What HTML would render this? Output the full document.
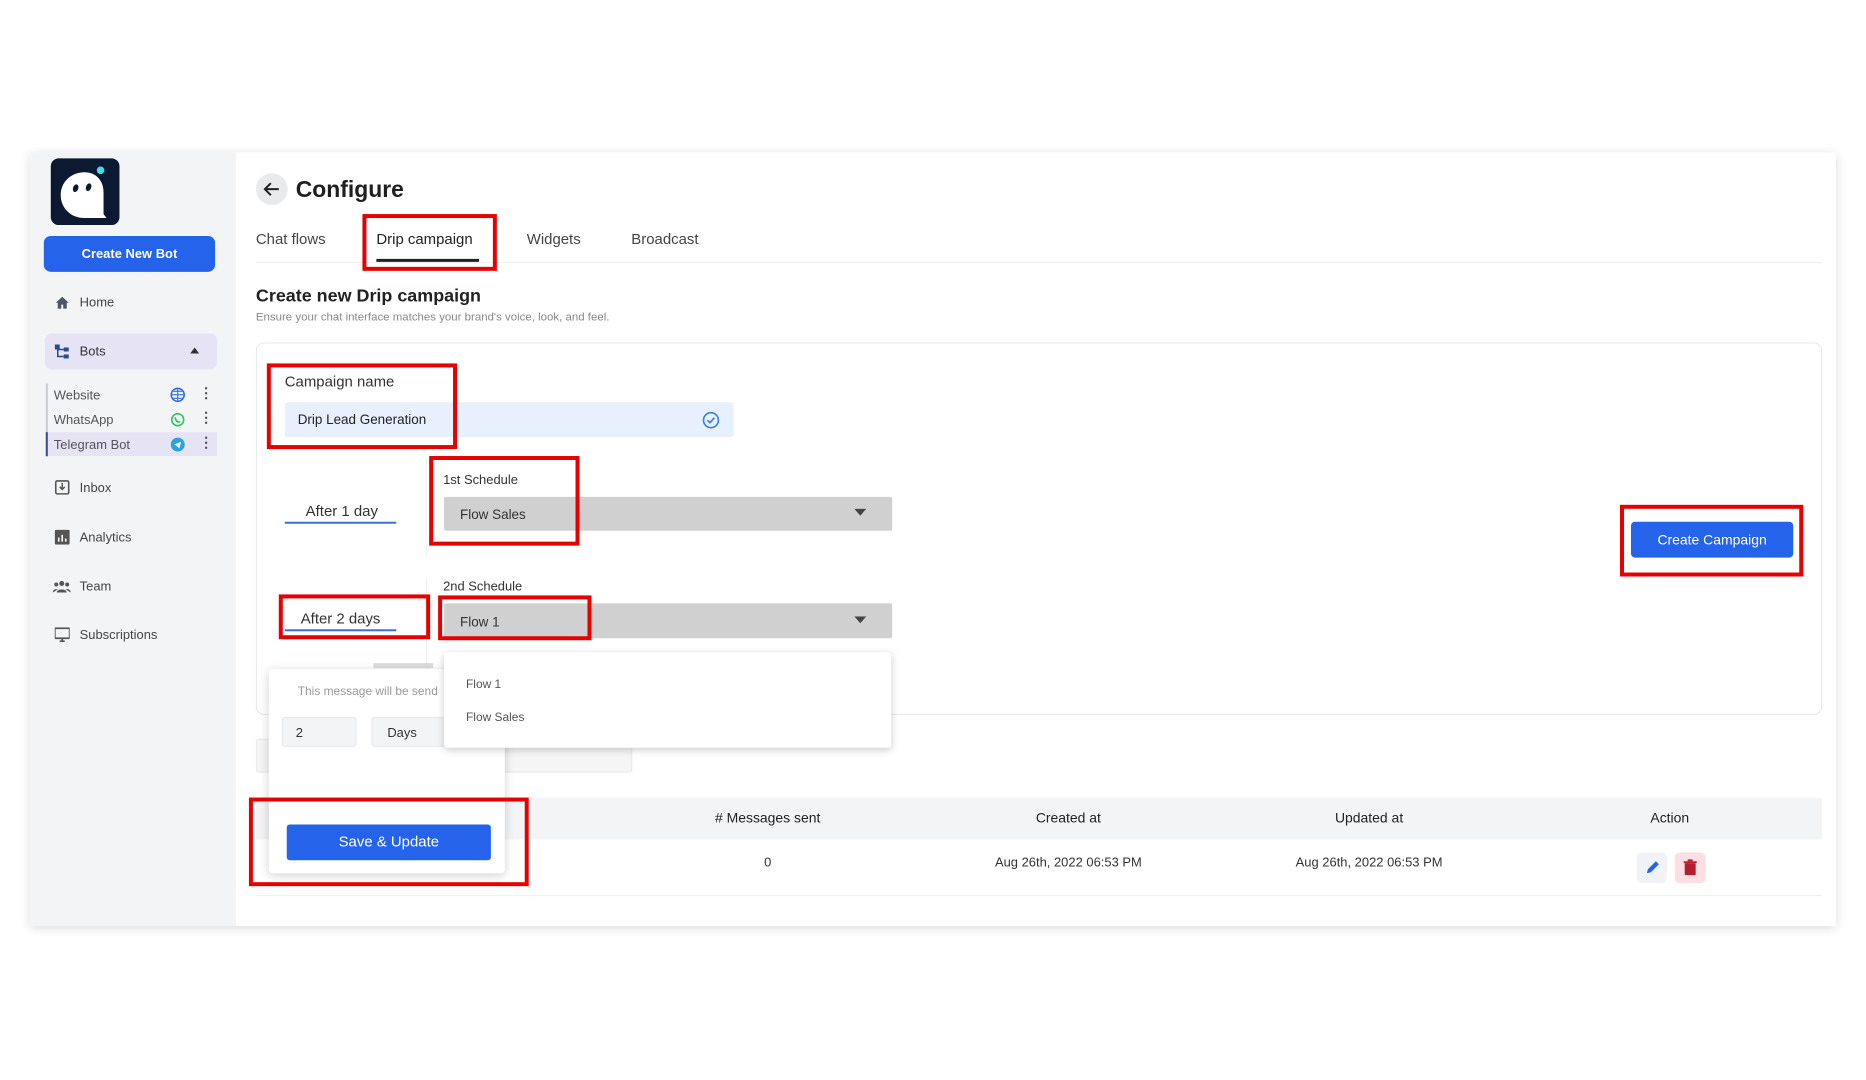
<!DOCTYPE html>
<html><head><meta charset="utf-8"><style>
*{box-sizing:border-box;margin:0;padding:0}
body{width:1866px;height:1080px;background:#fff;font-family:"Liberation Sans",sans-serif;position:relative;overflow:hidden;color:#222}
#w{position:absolute;left:0;top:0;width:1866px;height:1080px;transform:scale(0.9957);transform-origin:0 0}
.a{position:absolute}
.red{position:absolute;border:4px solid #e60000}
.t{position:absolute;white-space:nowrap}
</style></head><body><div id="w">
<div class="a" style="left:30px;top:153px;width:1814px;height:777px;background:#fff;box-shadow:0 2px 10px rgba(0,0,0,.15)"></div>
<div class="a" style="left:30px;top:153px;width:207px;height:777px;background:#f3f4f6"></div>
<!-- logo -->
<div class="a" style="left:51px;top:159px;width:69px;height:67px;background:#0b1933;border-radius:8px"></div>
<svg class="a" style="left:51px;top:159px" width="69" height="67"><path d="M34 14c-14 0-24 10-24 23 0 13 10 23 24 23h22l-3-4V34c0-12-8-20-19-20z" fill="#fff"/><ellipse cx="25" cy="30" rx="2.6" ry="4" transform="rotate(20 25 30)" fill="#0b1933"/><ellipse cx="38" cy="29" rx="2.6" ry="4" transform="rotate(20 38 29)" fill="#0b1933"/><circle cx="50" cy="12" r="3.8" fill="#3ee0e8"/></svg>
<div class="a" style="left:44px;top:237px;width:172px;height:36px;background:#2563eb;border-radius:7px;color:#fff;font-size:13px;font-weight:bold;text-align:center;line-height:36px">Create New Bot</div>
<svg class="a" style="left:55px;top:297px" width="15" height="14"><path d="M7.5 1L1 7h2v6h3.5V9h2v4H12V7h2z" fill="#4b5563"/></svg>
<div class="t" style="left:80px;top:296px;font-size:13px;color:#444">Home</div>
<div class="a" style="left:45px;top:335px;width:173px;height:36px;background:#e6e3f5;border-radius:7px"></div>
<svg class="a" style="left:55px;top:346px" width="15" height="15"><rect x="0" y="0" width="5" height="5" fill="#2a4a8a"/><rect x="9" y="3" width="5" height="4" fill="#2a4a8a"/><rect x="9" y="10" width="5" height="4" fill="#2a4a8a"/><path d="M3 5v7h6M3 5h6" stroke="#2a4a8a" stroke-width="1.5" fill="none"/></svg>
<div class="t" style="left:80px;top:345px;font-size:13px;color:#333">Bots</div>
<svg class="a" style="left:191px;top:349px" width="9" height="6"><path d="M0 6L4.5 0 9 6z" fill="#333"/></svg>
<div class="a" style="left:46px;top:385px;width:2px;height:74px;background:#c7c9d1"></div>
<div class="a" style="left:46px;top:434px;width:172px;height:24px;background:#e6e3f5"></div>
<div class="a" style="left:46px;top:434px;width:2px;height:24px;background:#3b4a8a"></div>
<div class="t" style="left:54px;top:389px;font-size:13px;color:#555">Website</div>
<div class="t" style="left:54px;top:414px;font-size:13px;color:#555">WhatsApp</div>
<div class="t" style="left:54px;top:439px;font-size:13px;color:#555">Telegram Bot</div>
<svg class="a" style="left:171px;top:389px" width="15" height="15"><circle cx="7.5" cy="7.5" r="6.5" fill="none" stroke="#2563eb" stroke-width="1.5"/><path d="M1 7.5h13M7.5 1v13M3 4h9M3 11h9" stroke="#2563eb" stroke-width="1"/></svg>
<svg class="a" style="left:171px;top:414px" width="15" height="15"><circle cx="7.5" cy="7.5" r="6" fill="none" stroke="#22c55e" stroke-width="1.5"/><path d="M5 5c0 3 2 5 5 5" stroke="#22c55e" stroke-width="1.5" fill="none"/></svg>
<svg class="a" style="left:171px;top:439px" width="15" height="15"><circle cx="7.5" cy="7.5" r="7" fill="#2aa3e0"/><path d="M4 7.5l7-3-2 7-2-2.5z" fill="#fff"/></svg>
<div class="t" style="left:200px;top:386px;font-size:14px;color:#444;font-weight:bold">⋮</div>
<div class="t" style="left:200px;top:411px;font-size:14px;color:#444;font-weight:bold">⋮</div>
<div class="t" style="left:200px;top:436px;font-size:14px;color:#444;font-weight:bold">⋮</div>
<svg class="a" style="left:55px;top:482px" width="15" height="15"><rect x="1" y="1" width="13" height="13" rx="1.5" fill="none" stroke="#555" stroke-width="1.6"/><path d="M7.5 3v6M5 7l2.5 2.5L10 7" stroke="#555" stroke-width="1.5" fill="none"/></svg>
<div class="t" style="left:80px;top:482px;font-size:13px;color:#444">Inbox</div>
<svg class="a" style="left:55px;top:532px" width="15" height="15"><rect x="0" y="0" width="15" height="15" rx="1.5" fill="#555"/><path d="M4 12V8M7.5 12V5M11 12V9" stroke="#fff" stroke-width="1.6"/></svg>
<div class="t" style="left:80px;top:532px;font-size:13px;color:#444">Analytics</div>
<svg class="a" style="left:53px;top:582px" width="18" height="14"><circle cx="9" cy="4" r="2.5" fill="#555"/><circle cx="3.5" cy="5" r="2" fill="#555"/><circle cx="14.5" cy="5" r="2" fill="#555"/><path d="M4 13c0-4 10-4 10 0zM0 13c0-3 3-4 5-3M18 13c0-3-3-4-5-3" fill="#555"/></svg>
<div class="t" style="left:80px;top:581px;font-size:13px;color:#444">Team</div>
<svg class="a" style="left:55px;top:630px" width="15" height="15"><rect x="0" y="1" width="15" height="10" rx="1" fill="none" stroke="#555" stroke-width="1.8"/><path d="M5 14h5M7.5 11v3" stroke="#555" stroke-width="1.8"/></svg>
<div class="t" style="left:80px;top:630px;font-size:13px;color:#444">Subscriptions</div>

<!-- header -->
<div class="a" style="left:257px;top:174px;width:32px;height:32px;border-radius:50%;background:#e9eaec"></div>
<svg class="a" style="left:264px;top:181px" width="18" height="18"><path d="M16 9H3M8 3L2 9l6 6" stroke="#222" stroke-width="2" fill="none"/></svg>
<div class="t" style="left:297px;top:177px;font-size:23px;font-weight:bold;color:#1f1f1f">Configure</div>
<div class="t" style="left:257px;top:232px;font-size:15px;color:#444">Chat flows</div>
<div class="t" style="left:378px;top:232px;font-size:15px;color:#222">Drip campaign</div>
<div class="t" style="left:529px;top:232px;font-size:15px;color:#444">Widgets</div>
<div class="t" style="left:634px;top:232px;font-size:15px;color:#444">Broadcast</div>
<div class="a" style="left:257px;top:263px;width:1573px;height:1px;background:#eee"></div>
<div class="a" style="left:378px;top:260px;width:103px;height:3px;background:#222"></div>
<div class="red" style="left:364px;top:215px;width:135px;height:57px"></div>
<div class="t" style="left:257px;top:287px;font-size:18px;font-weight:bold;color:#222">Create new Drip campaign</div>
<div class="t" style="left:257px;top:313px;font-size:11.5px;color:#888">Ensure your chat interface matches your brand's voice, look, and feel.</div>

<div class="a" style="left:257px;top:344px;width:1573px;height:374px;border:1px solid #e5e7eb;border-radius:8px"></div>
<div class="t" style="left:286px;top:375px;font-size:15px;color:#333">Campaign name</div>
<div class="a" style="left:286px;top:404px;width:451px;height:35px;background:#e8f0fe;border-radius:3px"></div>
<div class="t" style="left:299px;top:414px;font-size:13.5px;color:#222">Drip Lead Generation</div>
<svg class="a" style="left:705px;top:413px" width="18" height="18"><circle cx="9" cy="9" r="7.5" fill="none" stroke="#2f80ed" stroke-width="1.6"/><path d="M5.5 9l2.5 2.5 4.5-5" stroke="#2f80ed" stroke-width="1.6" fill="none"/></svg>
<div class="red" style="left:268px;top:365px;width:191px;height:86px"></div>

<div class="a" style="left:428px;top:460px;width:1px;height:100px;background:#eee"></div>
<div class="a" style="left:428px;top:580px;width:1px;height:110px;background:#eee"></div>
<div class="t" style="left:307px;top:505px;font-size:15px;color:#333">After 1 day</div>
<div class="a" style="left:286px;top:524px;width:112px;height:2px;background:#3b6fd8"></div>
<div class="t" style="left:445px;top:474px;font-size:13px;color:#333">1st Schedule</div>
<div class="a" style="left:446px;top:499px;width:450px;height:34px;background:#d0d0d0;border-radius:2px"></div>
<div class="t" style="left:462px;top:509px;font-size:13.5px;color:#333">Flow Sales</div>
<svg class="a" style="left:858px;top:511px" width="12" height="8"><path d="M0 0h12L6 7z" fill="#444"/></svg>
<div class="red" style="left:431px;top:458px;width:151px;height:90px"></div>

<div class="t" style="left:302px;top:613px;font-size:15px;color:#333">After 2 days</div>
<div class="a" style="left:286px;top:632px;width:112px;height:2px;background:#3b6fd8"></div>
<div class="t" style="left:445px;top:581px;font-size:13px;color:#333">2nd Schedule</div>
<div class="a" style="left:446px;top:606px;width:450px;height:35px;background:#d0d0d0;border-radius:2px"></div>
<div class="t" style="left:462px;top:617px;font-size:13.5px;color:#333">Flow 1</div>
<svg class="a" style="left:858px;top:619px" width="12" height="8"><path d="M0 0h12L6 7z" fill="#444"/></svg>
<div class="red" style="left:280px;top:597px;width:152px;height:45px"></div>
<div class="red" style="left:440px;top:598px;width:154px;height:45px"></div>

<div class="a" style="left:1638px;top:524px;width:163px;height:36px;background:#2563eb;border-radius:4px;color:#fff;font-size:14px;text-align:center;line-height:36px">Create Campaign</div>
<div class="red" style="left:1627px;top:507px;width:184px;height:72px"></div>

<!-- behind popup -->
<div class="a" style="left:257px;top:742px;width:378px;height:34px;background:#f5f5f5;border:1px solid #e8e8e8;border-radius:3px"></div>
<div class="a" style="left:375px;top:666px;width:60px;height:5px;background:#ddd"></div>

<!-- table -->
<div class="a" style="left:257px;top:801px;width:1573px;height:42px;background:#f3f4f6"></div>
<div class="t" style="left:671px;top:813px;width:200px;text-align:center;font-size:14px;color:#222">#&nbsp;Messages sent</div>
<div class="t" style="left:973px;top:813px;width:200px;text-align:center;font-size:14px;color:#222">Created at</div>
<div class="t" style="left:1275px;top:813px;width:200px;text-align:center;font-size:14px;color:#222">Updated at</div>
<div class="t" style="left:1577px;top:813px;width:200px;text-align:center;font-size:14px;color:#222">Action</div>
<div class="t" style="left:671px;top:858px;width:200px;text-align:center;font-size:13px;color:#333">0</div>
<div class="t" style="left:953px;top:858px;width:240px;text-align:center;font-size:13px;color:#333">Aug 26th, 2022 06:53 PM</div>
<div class="t" style="left:1255px;top:858px;width:240px;text-align:center;font-size:13px;color:#333">Aug 26th, 2022 06:53 PM</div>
<div class="a" style="left:1644px;top:856px;width:30px;height:31px;background:#f0f2f5;border-radius:5px"></div>
<svg class="a" style="left:1651px;top:863px" width="16" height="16"><path d="M3 14l1-4 8-8 3 3-8 8z" fill="#2563eb"/></svg>
<div class="a" style="left:1682px;top:856px;width:31px;height:31px;background:#fbdfe3;border-radius:5px"></div>
<svg class="a" style="left:1690px;top:863px" width="15" height="16"><rect x="2" y="4" width="11" height="12" rx="1" fill="#b3202c"/><rect x="1" y="2" width="13" height="2" fill="#b3202c"/><rect x="5" y="0" width="5" height="2" fill="#b3202c"/></svg>
<div class="a" style="left:257px;top:899px;width:1573px;height:1px;background:#eee"></div>

<!-- popup -->
<div class="a" style="left:270px;top:672px;width:237px;height:205px;background:#fff;border-radius:4px;box-shadow:0 2px 10px rgba(0,0,0,.18)"></div>
<div class="t" style="left:299px;top:687px;font-size:12px;color:#999">This message will be send</div>
<div class="a" style="left:283px;top:720px;width:75px;height:30px;background:#f3f4f6;border:1px solid #e5e7eb;border-radius:3px"></div>
<div class="t" style="left:297px;top:728px;font-size:13px;color:#333">2</div>
<div class="a" style="left:373px;top:720px;width:80px;height:30px;background:#f3f4f6;border:1px solid #e5e7eb;border-radius:3px"></div>
<div class="t" style="left:389px;top:728px;font-size:13px;color:#333">Days</div>
<div class="a" style="left:288px;top:828px;width:205px;height:36px;background:#2563eb;border-radius:3px;color:#fff;font-size:15px;text-align:center;line-height:36px">Save &amp; Update</div>
<div class="red" style="left:250px;top:801px;width:281px;height:89px"></div>

<!-- dropdown -->
<div class="a" style="left:446px;top:655px;width:449px;height:96px;background:#fff;border-radius:3px;box-shadow:0 2px 8px rgba(0,0,0,.2)"></div>
<div class="t" style="left:468px;top:680px;font-size:12px;color:#555">Flow 1</div>
<div class="t" style="left:468px;top:713px;font-size:12px;color:#555">Flow Sales</div>
</div></body></html>
